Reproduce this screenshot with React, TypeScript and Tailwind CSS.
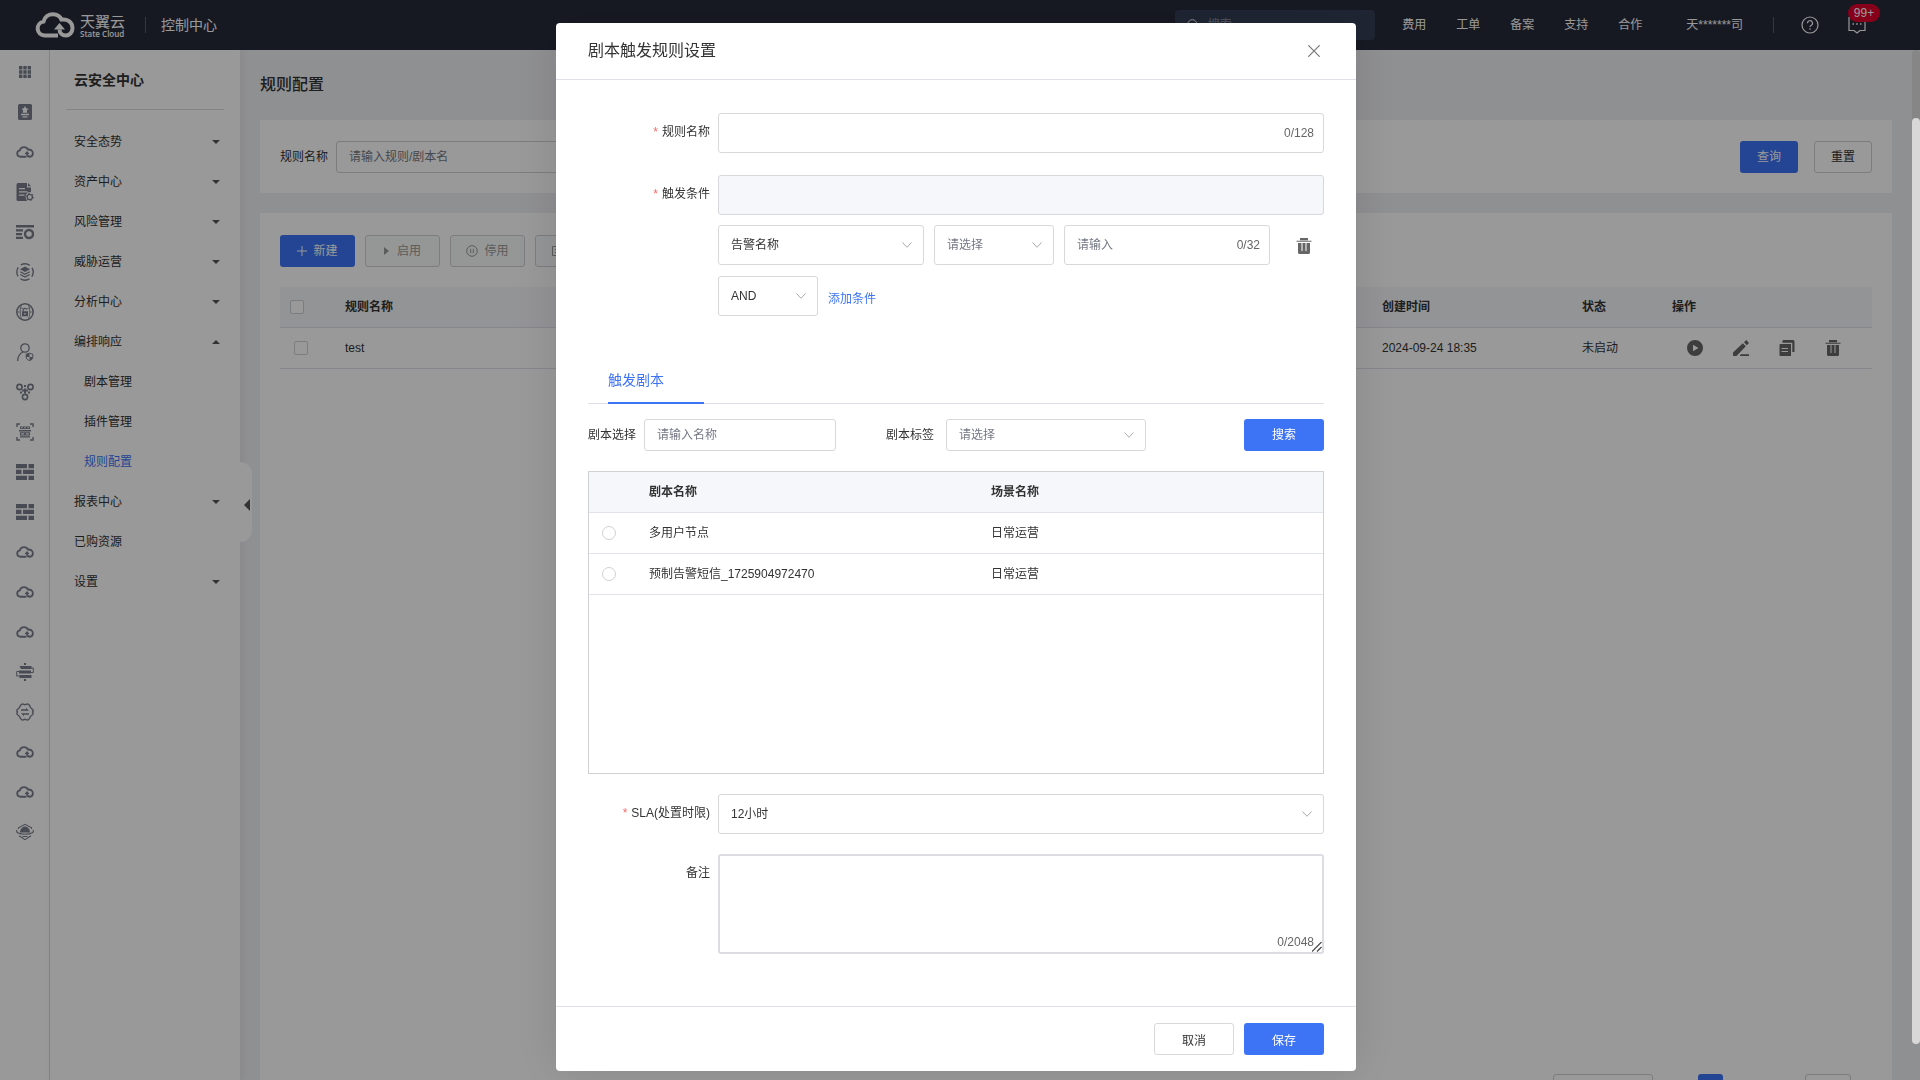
import type { ReactNode } from "react";

const LINK_ITEMS = ["费用", "工单", "备案", "支持", "合作"];

interface MenuItem {
  label: string;
  arrow?: "down" | "up";
  child?: boolean;
  active?: boolean;
}

const MENU: MenuItem[] = [
  { label: "安全态势", arrow: "down" },
  { label: "资产中心", arrow: "down" },
  { label: "风险管理", arrow: "down" },
  { label: "威胁运营", arrow: "down" },
  { label: "分析中心", arrow: "down" },
  { label: "编排响应", arrow: "up" },
  { label: "剧本管理", child: true },
  { label: "插件管理", child: true },
  { label: "规则配置", child: true, active: true },
  { label: "报表中心", arrow: "down" },
  { label: "已购资源" },
  { label: "设置", arrow: "down" },
];

const PLAYBOOKS = [
  { name: "多用户节点", scene: "日常运营" },
  { name: "预制告警短信_1725904972470", scene: "日常运营" },
];

/* ---------- icons ---------- */

function CloudShape({ className, weight }: { className: string; weight: number }) {
  return (
    <svg viewBox="0 0 40 26" className={className} fill="none" stroke="currentColor" strokeWidth={weight}>
      <path d="M23 23.5H9.500A7 7 0 0 1 8.500 9.600C9.500 5 13.500 2.200 18 2.200c4 0 7 2 8.500 5.400 5.500-1 11 2.500 11 8.400 0 4.500-3 7.500-6.500 7.500-4 0-6.500-2.500-6.500-6" />
      <path d="M19 17.500l5.500-6.500 5.500 6.500z" fill="currentColor" stroke="none" />
    </svg>
  );
}

function Rail({ children }: { children: ReactNode }) {
  return (
    <svg viewBox="0 0 18 18" className="h-[18px] w-[18px]" fill="currentColor">
      {children}
    </svg>
  );
}

const cloud = <CloudShape className="h-3 w-[18px]" weight={4} />;

const brick = (
  <Rail>
    <path d="M0 1h11v4.300H0zM12.500 1H18v4.300h-5.500zM0 6.800h5.500v4.300H0zM7 6.800h11v4.300H7zM0 12.700h11V17H0zM12.500 12.700H18V17h-5.500z" />
  </Rail>
);

const RAIL_ICONS: { label: string; icon: ReactNode }[] = [
  {
    label: "全部服务",
    icon: (
      <Rail>
        <path d="M3 3h3.400v3.400H3zM7.300 3h3.400v3.400H7.300zM11.600 3H15v3.400h-3.400zM3 7.300h3.400v3.400H3zM7.300 7.300h3.400v3.400H7.300zM11.600 7.300H15v3.400h-3.400zM3 11.600h3.400V15H3zM7.300 11.600h3.400V15H7.300zM11.600 11.600H15V15h-3.400z" />
      </Rail>
    ),
  },
  {
    label: "收藏",
    icon: (
      <Rail>
        <path
          fillRule="evenodd"
          d="M3.500 1h11A1.500 1.500 0 0 1 16 2.500v13a1.500 1.500 0 0 1-1.500 1.500h-11A1.500 1.500 0 0 1 2 15.500v-13A1.500 1.500 0 0 1 3.500 1zM9 3L7.800 5.200 5.500 5.700 7.200 7.400 6.800 9.700h4.400L10.800 7.400l1.700-1.700-2.300-.5zM5 10.800v1.400h8v-1.400zM6.500 13.300v1.300h5v-1.300z"
        />
      </Rail>
    ),
  },
  { label: "云服务", icon: cloud },
  {
    label: "日志",
    icon: (
      <Rail>
        <path
          fillRule="evenodd"
          d="M2 0h9v4.500h4V9.300A4.500 4.500 0 0 0 10 16l1 2H2a1.500 1.500 0 0 1-1.500-1.500v-15A1.500 1.500 0 0 1 2 0zM3 5v1.200h6V5zM3 8.300v1.200h8.500V8.300zM3 11.600v1.200h5.500v-1.200z"
        />
        <path d="M12 0l3 3.300h-3z" />
        <circle cx="13.800" cy="14" r="2.600" fill="none" stroke="currentColor" strokeWidth="1.300" />
        <circle cx="13.800" cy="14" r="3.700" fill="none" stroke="currentColor" strokeWidth="1" strokeDasharray="1.400 2.470" />
      </Rail>
    ),
  },
  {
    label: "审计",
    icon: (
      <Rail>
        <path d="M0 2h18v2.400H0zM0 6.200h7v2.200H0zM0 10h6v2.200H0zM0 13.800h7V16H0z" />
        <circle cx="13" cy="11" r="4" fill="none" stroke="currentColor" strokeWidth="2.400" />
      </Rail>
    ),
  },
  {
    label: "容器",
    icon: (
      <Rail>
        <circle cx="9" cy="9" r="8.200" fill="none" stroke="currentColor" strokeWidth="1.400" strokeDasharray="9.500 3.380" strokeDashoffset="4.700" />
        <path d="M9 3.500l5 2.700-5 2.700-5-2.700z" />
        <path d="M4.300 8.700L9 11.200l4.700-2.500M4.300 11.500L9 14l4.700-2.500" fill="none" stroke="currentColor" strokeWidth="1.300" />
      </Rail>
    ),
  },
  {
    label: "网络安全",
    icon: (
      <Rail>
        <g fill="none" stroke="currentColor">
          <circle cx="9" cy="9" r="8.200" strokeWidth="1.500" />
          <path d="M1 9h3M14 9h3M3.500 4c1.500 1.300 2.500 1.500 3.500 1.500M14.500 4c-1.500 1.300-2.500 1.500-3.500 1.500M6 1.500C4.500 4 4.300 6 4.300 9s.2 5 1.700 7.500M12 1.500c1.500 2.500 1.700 4.500 1.700 7.500s-.2 5-1.700 7.500" strokeWidth=".8" />
          <path d="M7.200 8.500V7a1.800 1.800 0 0 1 3.500-.5" strokeWidth="1.200" />
        </g>
        <path fillRule="evenodd" d="M6 8.300h6v5H6zM8.400 10v1.800h1.200V10z" />
      </Rail>
    ),
  },
  {
    label: "用户安全",
    icon: (
      <Rail>
        <g fill="none" stroke="currentColor" strokeWidth="1.300">
          <circle cx="9" cy="5" r="4.200" />
          <path d="M1.700 18c0-4.500 2-7.500 5.300-9" />
          <path d="M13.500 10.200l3.300 1v2.800c0 2-1.300 2.900-3.300 3.700-2-.8-3.300-1.700-3.300-3.700v-2.800z" strokeWidth="1" />
        </g>
        <path d="M13.500 10.200v3.800h-3.300v-2.800zM13.500 14h3.300c0 2-1.300 2.900-3.300 3.700z" />
      </Rail>
    ),
  },
  {
    label: "资产拓扑",
    icon: (
      <Rail>
        <g fill="none" stroke="currentColor" strokeWidth="1.600">
          <circle cx="3.500" cy="4" r="2.600" />
          <circle cx="14.500" cy="4" r="2.600" />
          <circle cx="9" cy="14" r="2.600" />
        </g>
        <path d="M8 2h2v2H8zM8 5.500h2v5H8zM4 8.500h2v2H4zM12 8.500h2v2h-2zM6 6.500h2v2H6zM10 6.500h2v2h-2z" />
      </Rail>
    ),
  },
  {
    label: "扫描",
    icon: (
      <Rail>
        <path d="M1 4V1h3M14 1h3v3M1 14v3h3M14 17h3v-3" fill="none" stroke="currentColor" strokeWidth="1.400" />
        <path fillRule="evenodd" d="M4 3.500h10V6H4zM5 4.300v1h1.500v-1zM8.200 4.300v1h1.600v-1zM11.500 4.300v1H13v-1zM3 7h12v1.500H3zM4 9.300h10v3.200H4zM5.200 10.200v1.400h3v-1.400zM10 10.200v1.400h2.800v-1.400zM4 13.300h10v1.200H4z" />
      </Rail>
    ),
  },
  { label: "防火墙", icon: brick },
  { label: "Web防火墙", icon: brick },
  { label: "云主机", icon: cloud },
  { label: "云网络", icon: cloud },
  { label: "云存储", icon: cloud },
  {
    label: "数据库审计",
    icon: (
      <Rail>
        <path d="M8 0h2v2H8zM3.500 3h12v3H5zM3 7.500h12v3H3zM3.500 12h12v3h-12zM8 16h2v2H8z" />
        <path d="M15 5h2.300v4.500H15M3 8.500H.7V13H4" fill="none" stroke="currentColor" strokeWidth="1" />
      </Rail>
    ),
  },
  {
    label: "流量编排",
    icon: (
      <Rail>
        <path d="M6 1.200c1.500-.6 2 .6 3 .6s1.500-1.200 3-.6 2 1.700 2.300 3c.2 1 2.700 1.800 2.900 3.300.1 1-.7 1-.7 1.500s.8.500.7 1.500c-.2 1.500-2.700 2.300-2.900 3.300-.3 1.300-.8 2.400-2.300 3s-2-.6-3-.6-1.500 1.200-3 .6-2-1.700-2.300-3C3.500 12.800 1 12 .8 10.500c-.1-1 .7-1 .7-1.500S.7 8.500.8 7.500C1 6 3.500 5.200 3.700 4.200 4 2.900 4.500 1.800 6 1.200z" fill="none" stroke="currentColor" strokeWidth="1.400" />
        <path d="M5 6.300h5V4.800l3 3H5zM13 11.700H8v1.500l-3-3h8z" />
      </Rail>
    ),
  },
  { label: "云备份", icon: cloud },
  { label: "云容灾", icon: cloud },
  {
    label: "态势感知",
    icon: (
      <Rail>
        <path d="M4 9.500C4 6 6.500 3.500 9 3.500s5 2.500 5 6z" />
        <path d="M2.500 6V4.800L9 1.300l6.500 3.500V6M3 12.800l6 3.900 6-3.900M1 7c-1.500 2.500 2 4.300 8 4.300S18.500 9.500 17 7M6.500 13.500h5" fill="none" stroke="currentColor" strokeWidth="1.100" />
      </Rail>
    ),
  },
];

function TrashIcon() {
  return (
    <svg viewBox="0 0 16 16" className="h-4 w-4" fill="currentColor">
      <path d="M4 0h8v2.200H4zM.5 2.700h15v1.100H.5z" />
      <path fillRule="evenodd" d="M2 5h12v9.500a1.500 1.500 0 0 1-1.500 1.500h-9A1.500 1.500 0 0 1 2 14.500zM5.500 5v8h1V5zM9.500 5v8h1V5z" />
    </svg>
  );
}

function PlayIcon() {
  return (
    <svg viewBox="0 0 16 16" className="h-4 w-4" fill="currentColor">
      <path fillRule="evenodd" d="M8 0a8 8 0 1 1 0 16A8 8 0 0 1 8 0zM6 4.700v6.600L11.500 8z" />
    </svg>
  );
}

function EditIcon() {
  return (
    <svg viewBox="0 0 16 16" className="h-4 w-4" fill="currentColor">
      <path d="M0 16v-3.500L9.800 3.300l3 3L3.500 16zM11 2.200L13.200 0 16 2.900 13.800 5.200zM7.500 14.300H16V16H7z" />
    </svg>
  );
}

function CopyIcon() {
  return (
    <svg viewBox="0 0 16 16" className="h-4 w-4" fill="currentColor">
      <path d="M4.500 0H14a1.500 1.500 0 0 1 1.500 1.500V12h-2.200V2.800H3.500V1A1 1 0 0 1 4.500 0z" />
      <path fillRule="evenodd" d="M1.500 4H12v12H1.500a1 1 0 0 1-1-1V5a1 1 0 0 1 1-1zM2.500 8v1H9V8zM2.500 11v1H9v-1z" />
    </svg>
  );
}

function Chevron() {
  return (
    <svg
      viewBox="0 0 10 6"
      className="pointer-events-none absolute top-1/2 right-3 h-1.5 w-2.5 -translate-y-1/2 text-[#a8abb2]"
      fill="none"
      stroke="currentColor"
    >
      <path d="M.5.5L5 5.300 9.500.5" />
    </svg>
  );
}

/* ---------- form parts ---------- */

interface SelectProps {
  id?: string;
  label?: string;
  value: string;
  className: string;
  muted?: boolean;
}

function SelectBox({ id, label, value, className, muted }: SelectProps) {
  return (
    <div className={`relative ${className}`}>
      <select
        id={id}
        aria-label={label}
        className={`h-full w-full appearance-none rounded-[3px] border border-[#d8d8dc] bg-white px-3 ${muted ? "text-[#757985]" : "text-[#333]"}`}
      >
        <option>{value}</option>
      </select>
      <Chevron />
    </div>
  );
}

interface FieldProps {
  label: string;
  htmlFor: string;
  required?: boolean;
  children: ReactNode;
}

function Field({ label, htmlFor, required, children }: FieldProps) {
  return (
    <div className="flex items-start gap-2">
      <label htmlFor={htmlFor} className="flex h-[38px] w-[122px] shrink-0 items-center justify-end">
        {required && <span className="mr-1 text-[#f56c6c]">*</span>}
        {label}
      </label>
      <div className="min-w-0 flex-1">{children}</div>
    </div>
  );
}

/* ---------- page ---------- */

function TopBar() {
  return (
    <header className="flex h-[50px] shrink-0 items-center bg-[#272b3a] pl-[35px] pr-[54px] text-white">
      <CloudShape className="h-[26px] w-10" weight={4} />
      <div className="ml-[5px] flex flex-col pt-0.5">
        <span className="text-[15px] leading-4">天翼云</span>
        <span className="font-['Open_Sans',sans-serif] text-[8px] leading-2 font-semibold">State Cloud</span>
      </div>
      <span className="ml-5 h-4 w-px bg-[#5b5e6a]" />
      <span className="ml-[15px] text-sm">控制中心</span>
      <div className="ml-auto flex h-[30px] w-[200px] items-center rounded-sm bg-[#353e56] pl-3">
        <svg viewBox="0 0 14 14" className="h-3.5 w-3.5" fill="none" stroke="currentColor">
          <circle cx="6" cy="6" r="5" />
          <path d="M9.700 9.700L13 13" />
        </svg>
        <input
          aria-label="搜索"
          placeholder="搜索"
          className="ml-2 w-full bg-transparent placeholder:text-[#8b90a0]"
        />
      </div>
      <nav className="ml-[27px] flex gap-[30px]">
        {LINK_ITEMS.map((t) => (
          <a key={t} href="#">
            {t}
          </a>
        ))}
      </nav>
      <a href="#" className="ml-11">
        天*******司
      </a>
      <span className="ml-[30px] h-4 w-px bg-[#5b5e6a]" />
      <button aria-label="帮助" className="ml-[27px]">
        <svg viewBox="0 0 18 18" className="h-[18px] w-[18px]" fill="none" stroke="currentColor" strokeWidth="1.200">
          <circle cx="9" cy="9" r="8" />
          <path d="M6.500 7.200a2.500 2.500 0 1 1 3.500 2.300c-.7.400-1 .8-1 1.600M9 12.300v1.400" />
        </svg>
      </button>
      <button aria-label="消息" className="relative ml-[29px]">
        <svg viewBox="0 0 18 18" className="h-[18px] w-[18px]" fill="none" stroke="currentColor" strokeWidth="1.200">
          <path d="M1 1.500h16v13h-5L9 17l-3-2.500H1z" />
          <path d="M4.500 8h1.500M8.200 8h1.600M12 8h1.500" strokeWidth="1.600" />
        </svg>
        <span className="absolute -top-3 left-0 flex h-[18px] w-8 items-center justify-center rounded-full bg-[#e2002a]">
          99+
        </span>
      </button>
    </header>
  );
}

function IconRail() {
  return (
    <nav className="flex w-[50px] shrink-0 flex-col items-center border-r border-[#dcdcdf] bg-white pt-0.5 text-[#7a7e8c]">
      {RAIL_ICONS.map((item) => (
        <a key={item.label} href="#" aria-label={item.label} className="flex h-10 shrink-0 items-center">
          {item.icon}
        </a>
      ))}
    </nav>
  );
}

function SideMenu() {
  return (
    <aside className="relative z-10 w-[190px] shrink-0 bg-white px-4 shadow-[2px_0_8px_rgba(0,0,0,0.06)]">
      <h2 className="flex h-[60px] items-center border-b border-[#dcdcdf] pl-2 text-sm font-bold text-[#333]">
        云安全中心
      </h2>
      <ul className="mt-3">
        {MENU.map((item) => (
          <li key={item.label}>
            <a
              href="#"
              className={`flex h-10 items-center justify-between pr-1 ${item.child ? "pl-[18px]" : "pl-2"} ${item.active ? "text-[#3d73f5]" : "text-[#333]"}`}
            >
              {item.label}
              {item.arrow && (
                <svg viewBox="0 0 8 4" className="h-1 w-2 text-[#555]" fill="currentColor">
                  <path d={item.arrow === "down" ? "M0 0h8L4 4z" : "M0 4h8L4 0z"} />
                </svg>
              )}
            </a>
          </li>
        ))}
      </ul>
      {/* collapse handle */}
      <button
        aria-label="收起菜单"
        className="absolute top-[412px] left-full flex h-20 w-3 items-center justify-end rounded-r-xl bg-white pt-1.5 pr-0.5"
      >
        <svg viewBox="0 0 6 12" className="h-3 w-1.5 text-[#555]" fill="currentColor">
          <path d="M6 0v12L0 6z" />
        </svg>
      </button>
    </aside>
  );
}

const disabledBtn =
  "flex h-8 w-[75px] items-center justify-center gap-1.5 rounded-[3px] border border-[#d0d1d5] bg-[#f9fafb] text-[#999]";

const checkBox = "block h-3.5 w-3.5 appearance-none rounded-xs border border-[#cfd0d4] bg-white";

function RulePage() {
  return (
    <main className="flex min-w-0 flex-1 flex-col bg-[#eff0f4] pr-7 pl-5">
      <h1 className="flex h-[70px] items-center text-base font-medium text-[#333]">规则配置</h1>
      <section className="flex h-[73px] shrink-0 items-center bg-white px-5">
        <label htmlFor="rule-search" className="mr-2">
          规则名称
        </label>
        <input
          id="rule-search"
          placeholder="请输入规则/剧本名"
          className="h-8 w-60 rounded-[3px] border border-[#d0d1d5] px-3 placeholder:text-[#757985]"
        />
        <button className="ml-auto h-8 w-[58px] rounded-[3px] bg-[#3d73f5] text-white">查询</button>
        <button className="ml-4 h-8 w-[58px] rounded-[3px] border border-[#d0d1d5]">重置</button>
      </section>
      <section className="mt-5 flex flex-1 flex-col bg-white px-5 pt-[22px]">
        <div className="flex gap-2.5">
          <button className="flex h-8 w-[75px] items-center justify-center gap-1.5 rounded-[3px] bg-[#3d73f5] text-white">
            <svg viewBox="0 0 10 10" className="h-2.5 w-2.5" stroke="currentColor">
              <path d="M5 0v10M0 5h10" />
            </svg>
            新建
          </button>
          <button disabled className={disabledBtn}>
            <svg viewBox="0 0 5 8" className="mr-0.5 h-2 w-[5px]" fill="currentColor">
              <path d="M0 0l5 4-5 4z" />
            </svg>
            启用
          </button>
          <button disabled className={disabledBtn}>
            <svg viewBox="0 0 12 12" className="h-3 w-3" fill="none" stroke="currentColor">
              <circle cx="6" cy="6" r="5.300" />
              <path d="M4.700 3.800v4.400M7.300 3.800v4.400" />
            </svg>
            停用
          </button>
          <button disabled className={disabledBtn}>
            <svg viewBox="0 0 12 12" className="h-3 w-3" fill="none" stroke="currentColor">
              <path d="M1.500 1.500h9v9h-9zM4 4.500h4M4 7.500h4" />
            </svg>
            删除
          </button>
        </div>
        <table className="mt-5 w-full table-fixed text-left text-[#333]">
          <colgroup>
            <col className="w-[55px]" />
            <col />
            <col className="w-[200px]" />
            <col className="w-[90px]" />
            <col className="w-[210px]" />
          </colgroup>
          <thead>
            <tr className="h-10 border-b border-[#dfe1ea] bg-[#f6f7fa]">
              <th className="pl-2.5">
                <input type="checkbox" aria-label="全选" className={checkBox} />
              </th>
              <th className="px-2.5 font-bold">规则名称</th>
              <th className="px-2.5 font-bold">创建时间</th>
              <th className="px-2.5 font-bold">状态</th>
              <th className="px-2.5 font-bold">操作</th>
            </tr>
          </thead>
          <tbody>
            <tr className="h-[41px] border-b border-[#dfe1ea]">
              <td className="pl-3.5">
                <input type="checkbox" aria-label="test" className={checkBox} />
              </td>
              <td className="px-2.5">test</td>
              <td className="px-2.5">2024-09-24 18:35</td>
              <td className="px-2.5">未启动</td>
              <td>
                <div className="flex gap-[30px] pl-[25px] text-[#666]">
                  <button aria-label="启动">
                    <PlayIcon />
                  </button>
                  <button aria-label="编辑">
                    <EditIcon />
                  </button>
                  <button aria-label="复制">
                    <CopyIcon />
                  </button>
                  <button aria-label="删除">
                    <TrashIcon />
                  </button>
                </div>
              </td>
            </tr>
          </tbody>
        </table>
        {/* the pager runs past the bottom edge of the window */}
        <div className="mt-auto -mb-[26px] flex justify-end pr-[21px]">
          <select aria-label="每页条数" className="h-8 w-[100px] appearance-none rounded-[3px] border border-[#d0d1d5]" />
          <button aria-label="第1页" className="ml-[45px] h-8 w-[25px] rounded-[3px] bg-[#3d73f5]" />
          <input aria-label="跳转页码" className="ml-[82px] h-8 w-[46px] rounded-[3px] border border-[#d0d1d5]" />
        </div>
      </section>
    </main>
  );
}

function RuleDialog() {
  return (
    <div
      role="dialog"
      aria-label="剧本触发规则设置"
      className="mx-auto mt-[23px] w-[800px] rounded bg-white text-[#333] shadow-[0_0_50px_rgba(0,0,0,0.12)]"
    >
      <div className="flex h-[57px] items-center justify-between border-b border-[#e0e0ea] pr-9 pl-8">
        <h2 className="text-base">剧本触发规则设置</h2>
        <button aria-label="关闭" className="text-[#777]">
          <svg viewBox="0 0 12 12" className="h-3 w-3" fill="none" stroke="currentColor" strokeWidth="1.200">
            <path d="M.3.3l11.400 11.400M11.700.3L.3 11.700" />
          </svg>
        </button>
      </div>

      <div className="px-8 pt-[33px] pb-[52px]">
        <Field label="规则名称" htmlFor="rule-name" required>
          <div className="relative">
            <input id="rule-name" className="block h-10 w-full rounded-[3px] border border-[#d8d8dc] px-3" />
            <span className="absolute top-3 right-2.5 leading-4 text-[#666]">0/128</span>
          </div>
        </Field>

        <div className="mt-[22px]">
          <Field label="触发条件" htmlFor="condition" required>
            <input
              id="condition"
              readOnly
              className="block h-10 w-full rounded-[3px] border border-[#d8d8dc] bg-[#f6f7fa] px-3"
            />
            <div className="mt-2.5 flex gap-2.5">
              <SelectBox label="条件字段" value="告警名称" className="h-10 w-[206px]" />
              <SelectBox label="条件运算符" value="请选择" className="h-10 w-[120px]" muted />
              <div className="relative">
                <input
                  aria-label="条件值"
                  placeholder="请输入"
                  className="block h-10 w-[206px] rounded-[3px] border border-[#d8d8dc] px-3 placeholder:text-[#757985]"
                />
                <span className="absolute top-3 right-2.5 leading-4 text-[#666]">0/32</span>
              </div>
              <button aria-label="删除条件" className="ml-4 pt-0.5 text-[#666]">
                <TrashIcon />
              </button>
            </div>
            <div className="mt-[11px] flex items-center gap-2.5">
              <SelectBox label="条件关系" value="AND" className="h-10 w-[100px]" />
              <a href="#" className="pt-1.5 text-[#3d73f5]">
                添加条件
              </a>
            </div>
          </Field>
        </div>

        <div className="mt-[43px] flex h-[45px] border-b border-[#e0e0ea] pl-5">
          <button className="-mb-px w-24 border-b-2 border-[#3d73f5] pb-0.5 text-left text-sm text-[#3d73f5]">
            触发剧本
          </button>
        </div>

        <div className="mt-[15px] flex items-center">
          <label htmlFor="playbook-name">剧本选择</label>
          <input
            id="playbook-name"
            placeholder="请输入名称"
            className="ml-2 h-8 w-48 rounded-[3px] border border-[#d8d8dc] px-3 placeholder:text-[#757985]"
          />
          <label htmlFor="playbook-tag" className="ml-[50px]">
            剧本标签
          </label>
          <SelectBox id="playbook-tag" value="请选择" className="ml-3 h-8 w-[200px]" muted />
          <button className="ml-auto h-8 w-20 rounded-[3px] bg-[#3d73f5] text-white">搜索</button>
        </div>

        <div className="mt-5 h-[303px] border border-[#d0d1d5]">
          <table className="w-full table-fixed text-left">
            <colgroup>
              <col className="w-[50px]" />
              <col className="w-[342px]" />
              <col />
            </colgroup>
            <thead>
              <tr className="h-10 border-b border-[#e0e3ec] bg-[#f6f7fa]">
                <th />
                <th className="px-2.5 font-bold">剧本名称</th>
                <th className="px-2.5 font-bold">场景名称</th>
              </tr>
            </thead>
            <tbody>
              {PLAYBOOKS.map((p) => (
                <tr key={p.name} className="h-[41px] border-b border-[#e0e3ec]">
                  <td className="pl-[13px]">
                    <input
                      type="radio"
                      name="playbook"
                      aria-label={p.name}
                      className="block h-3.5 w-3.5 appearance-none rounded-full border border-[#d0d1d5]"
                    />
                  </td>
                  <td className="px-2.5">{p.name}</td>
                  <td className="px-2.5">{p.scene}</td>
                </tr>
              ))}
            </tbody>
          </table>
        </div>

        <div className="mt-5">
          <Field label="SLA(处置时限)" htmlFor="sla" required>
            <SelectBox id="sla" value="12小时" className="h-10" />
          </Field>
        </div>

        <div className="mt-5">
          <Field label="备注" htmlFor="remark">
            <div className="relative">
              <textarea
                id="remark"
                className="block h-[100px] w-full resize-none rounded-[3px] border-2 border-[#dcdce2] px-3 py-2"
              />
              <span className="absolute right-2.5 bottom-1 leading-4 text-[#666]">0/2048</span>
              <svg
                viewBox="0 0 10 10"
                className="absolute right-0.5 bottom-0.5 h-2.5 w-2.5 text-[#444]"
                fill="none"
                stroke="currentColor"
                strokeWidth="1.200"
              >
                <path d="M0 9.500L9.500 0M5 9.500L9.500 5" />
              </svg>
            </div>
          </Field>
        </div>
      </div>

      <div className="flex justify-end gap-2.5 border-t border-[#e0e0e6] px-8 py-4">
        <button className="h-8 w-20 rounded-[3px] border border-[#d8d8dc] pt-1">取消</button>
        <button className="h-8 w-20 rounded-[3px] bg-[#3d73f5] pt-1 text-white">保存</button>
      </div>
    </div>
  );
}

export default function App() {
  return (
    <div className="relative flex h-screen flex-col overflow-hidden font-['Liberation_Sans','Noto_Sans_CJK_SC',sans-serif] text-xs text-[#333]">
      <TopBar />
      <div className="flex min-h-0 flex-1">
        <IconRail />
        <SideMenu />
        <RulePage />
      </div>
      <div className="absolute top-[50px] right-0 z-10 h-[90%] w-2 rounded bg-[#e0e0e0]" />

      <div className="fixed inset-0 z-20 overflow-hidden bg-black/40 pr-2">
        <RuleDialog />
        <div className="absolute top-[118px] right-0 bottom-9 w-2 rounded bg-[#d8d8d8]" />
      </div>
    </div>
  );
}
